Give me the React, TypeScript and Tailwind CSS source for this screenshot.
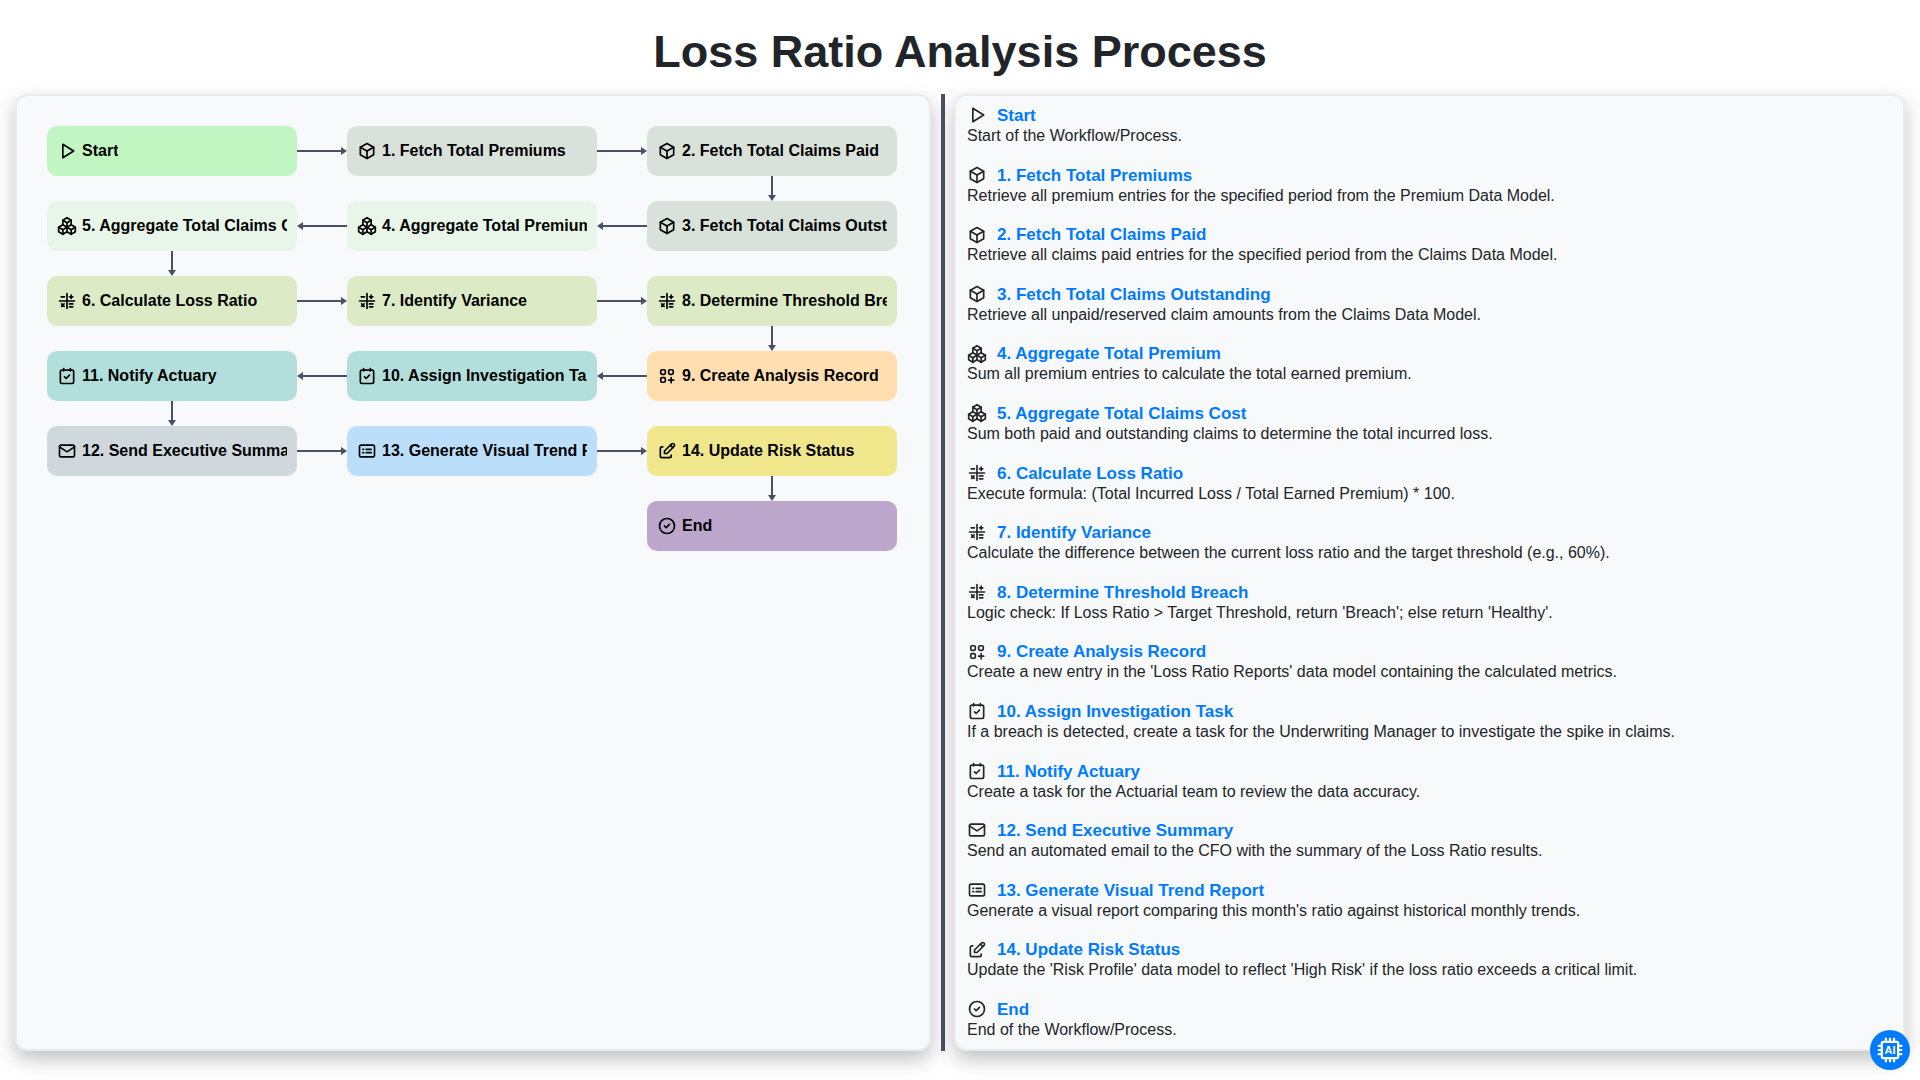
import { ReactNode } from "react";
import { TbBox, TbCircleCheck, TbEdit, TbMail, TbPackages, TbPlayerPlay } from "react-icons/tb";

function Glyph({ children }: { children: ReactNode }) {
  return (
    <svg width="1em" height="1em" viewBox="0 0 24 24" fill="none" stroke="currentColor" strokeWidth="2" strokeLinecap="round" strokeLinejoin="round">
      {children}
    </svg>
  );
}

const TaskIcon = () => (
  <Glyph>
    <rect x="4" y="5" width="16" height="16" rx="2" />
    <path d="M8 3v3M16 3v3M9 13l2 2l4 -4" />
  </Glyph>
);

const ReportIcon = () => (
  <Glyph>
    <rect x="3" y="5" width="18" height="14" rx="2" />
    <path d="M7 10h1M7 14h1M11 10h6M11 14h6" />
  </Glyph>
);

const MathIcon = () => (
  <Glyph>
    <path d="M3 12h18M12 3v18M5 7h4M15 7h4M17 5v4M5.5 15.5l3 3M8.5 15.5l-3 3M15 15.5h4M15 19h4" />
  </Glyph>
);

const RecordIcon = () => (
  <Glyph>
    <rect x="4.5" y="4.5" width="5.5" height="5.5" rx="1.5" />
    <rect x="14" y="4.5" width="5.5" height="5.5" rx="1.5" />
    <rect x="4.5" y="14" width="5.5" height="5.5" rx="1.5" />
    <path d="M14 17h6M17 14v6" />
  </Glyph>
);

type Step = { title: string; desc: string; icon: ReactNode; bg: string };

const STEPS: Record<string, Step> = {
  start: { title: "Start", desc: "Start of the Workflow/Process.", icon: <TbPlayerPlay />, bg: "bg-[#c1f5c1]" },
  s1: { title: "1. Fetch Total Premiums", desc: "Retrieve all premium entries for the specified period from the Premium Data Model.", icon: <TbBox />, bg: "bg-[#d9e2da]" },
  s2: { title: "2. Fetch Total Claims Paid", desc: "Retrieve all claims paid entries for the specified period from the Claims Data Model.", icon: <TbBox />, bg: "bg-[#d9e2da]" },
  s3: { title: "3. Fetch Total Claims Outstanding", desc: "Retrieve all unpaid/reserved claim amounts from the Claims Data Model.", icon: <TbBox />, bg: "bg-[#d9e2da]" },
  s4: { title: "4. Aggregate Total Premium", desc: "Sum all premium entries to calculate the total earned premium.", icon: <TbPackages />, bg: "bg-[#e8f5e9]" },
  s5: { title: "5. Aggregate Total Claims Cost", desc: "Sum both paid and outstanding claims to determine the total incurred loss.", icon: <TbPackages />, bg: "bg-[#e8f5e9]" },
  s6: { title: "6. Calculate Loss Ratio", desc: "Execute formula: (Total Incurred Loss / Total Earned Premium) * 100.", icon: <MathIcon />, bg: "bg-[#dcebc6]" },
  s7: { title: "7. Identify Variance", desc: "Calculate the difference between the current loss ratio and the target threshold (e.g., 60%).", icon: <MathIcon />, bg: "bg-[#dcebc6]" },
  s8: { title: "8. Determine Threshold Breach", desc: "Logic check: If Loss Ratio > Target Threshold, return 'Breach'; else return 'Healthy'.", icon: <MathIcon />, bg: "bg-[#dcebc6]" },
  s9: { title: "9. Create Analysis Record", desc: "Create a new entry in the 'Loss Ratio Reports' data model containing the calculated metrics.", icon: <RecordIcon />, bg: "bg-[#ffdeb0]" },
  s10: { title: "10. Assign Investigation Task", desc: "If a breach is detected, create a task for the Underwriting Manager to investigate the spike in claims.", icon: <TaskIcon />, bg: "bg-[#b2dfdb]" },
  s11: { title: "11. Notify Actuary", desc: "Create a task for the Actuarial team to review the data accuracy.", icon: <TaskIcon />, bg: "bg-[#b2dfdb]" },
  s12: { title: "12. Send Executive Summary", desc: "Send an automated email to the CFO with the summary of the Loss Ratio results.", icon: <TbMail />, bg: "bg-[#cfd8dc]" },
  s13: { title: "13. Generate Visual Trend Report", desc: "Generate a visual report comparing this month's ratio against historical monthly trends.", icon: <ReportIcon />, bg: "bg-[#bbdefb]" },
  s14: { title: "14. Update Risk Status", desc: "Update the 'Risk Profile' data model to reflect 'High Risk' if the loss ratio exceeds a critical limit.", icon: <TbEdit />, bg: "bg-[#f0e68c]" },
  end: { title: "End", desc: "End of the Workflow/Process.", icon: <TbCircleCheck />, bg: "bg-[#bca6cc]" },
};

const ORDER = ["start", "s1", "s2", "s3", "s4", "s5", "s6", "s7", "s8", "s9", "s10", "s11", "s12", "s13", "s14", "end"];

// snake layout: each row is read in the direction of its arrows
const ROWS: { cells: (string | null)[]; dir: "right" | "left"; down: number | null }[] = [
  { cells: ["start", "s1", "s2"], dir: "right", down: 2 },
  { cells: ["s5", "s4", "s3"], dir: "left", down: 0 },
  { cells: ["s6", "s7", "s8"], dir: "right", down: 2 },
  { cells: ["s11", "s10", "s9"], dir: "left", down: 0 },
  { cells: ["s12", "s13", "s14"], dir: "right", down: 2 },
  { cells: [null, null, "end"], dir: "right", down: null },
];

function ArrowH({ dir, show }: { dir: "right" | "left"; show: boolean }) {
  return (
    <div className="w-[50px] h-[50px] flex items-center shrink-0">
      {show && (
        <svg width="50" height="10" viewBox="0 0 50 10" className="block">
          {dir === "right" ? (
            <>
              <line x1="0" y1="5" x2="45" y2="5" stroke="#4a5065" strokeWidth="2" />
              <path d="M44 1 L50 5 L44 9 Z" fill="#4a5065" />
            </>
          ) : (
            <>
              <line x1="5" y1="5" x2="50" y2="5" stroke="#4a5065" strokeWidth="2" />
              <path d="M6 1 L0 5 L6 9 Z" fill="#4a5065" />
            </>
          )}
        </svg>
      )}
    </div>
  );
}

function ArrowDown() {
  return (
    <svg width="10" height="25" viewBox="0 0 10 25" className="block">
      <line x1="5" y1="0" x2="5" y2="20" stroke="#4a5065" strokeWidth="2" />
      <path d="M1 19 L5 25 L9 19 Z" fill="#4a5065" />
    </svg>
  );
}

function Node({ step }: { step: Step }) {
  return (
    <div className={`w-[250px] h-[50px] shrink-0 rounded-[10px] px-2.5 flex items-center gap-[5px] ${step.bg}`}>
      <span className="text-[20px] text-black shrink-0 flex">{step.icon}</span>
      <span className="font-bold text-base text-black whitespace-nowrap overflow-hidden">{step.title}</span>
    </div>
  );
}

export default function App() {
  return (
    <div className="w-[1920px] h-[1080px] overflow-hidden bg-white font-['Liberation_Sans',Arial,sans-serif] text-[#212529]">
      <h1 className="h-[94px] pt-[25px] text-center text-[45px] leading-[54px] font-bold">Loss Ratio Analysis Process</h1>

      <div className="flex h-[957px] pl-[15px]">
        {/* Diagram */}
        <div className="w-[916px] rounded-[12px] border-2 border-[#e9ecef] bg-[#f8f9fa] shadow-[0_8px_20px_rgba(0,0,0,0.25)] pl-[30px] pt-[30px]">
          {ROWS.map((row, i) => (
            <div key={i}>
              <div className="flex">
                {row.cells.map((id, c) => (
                  <div key={c} className="flex">
                    {id ? <Node step={STEPS[id]} /> : <div className="w-[250px] h-[50px]" />}
                    {c < 2 && <ArrowH dir={row.dir} show={!!id} />}
                  </div>
                ))}
              </div>
              {i < ROWS.length - 1 && (
                <div className="flex h-[25px]">
                  <div className={`w-[250px] flex justify-center ${row.down === 0 ? "" : "invisible"}`}>
                    <ArrowDown />
                  </div>
                  <div className="w-[350px]" />
                  <div className={`w-[250px] flex justify-center ${row.down === 2 ? "" : "invisible"}`}>
                    <ArrowDown />
                  </div>
                </div>
              )}
            </div>
          ))}
        </div>

        <div className="w-1 bg-[#4a5065] ml-2.5 mr-[9px]" />

        {/* Step descriptions */}
        <div className="w-[951px] rounded-[12px] border-2 border-[#e9ecef] bg-[#f8f9fa] shadow-[0_8px_20px_rgba(0,0,0,0.25)] pl-[11px] pt-[9.7px]">
          {ORDER.map((id) => {
            const s = STEPS[id];
            return (
              <div key={id} className="h-[59.6px]">
                <div className="flex items-center h-[20.3px]">
                  <span className="text-[20px] text-[#212529] w-[30px] shrink-0 flex -mt-px">{s.icon}</span>
                  <span className="font-bold text-[17px] text-[#007bff]">{s.title}</span>
                </div>
                <div className="text-base leading-5">{s.desc}</div>
              </div>
            );
          })}
        </div>
      </div>

      {/* AI button */}
      <div className="fixed left-[1870px] top-[1030px] w-10 h-10 rounded-full bg-[#007bff] flex items-center justify-center">
        <svg width="28" height="28" viewBox="0 0 24 24" fill="none" stroke="white" strokeWidth="1.9">
          <rect x="5" y="5" width="14" height="14" rx="1" />
          <path d="M1.5 8.5h3.5M1.5 12h3.5M1.5 15.5h3.5M19 8.5h3.5M19 12h3.5M19 15.5h3.5M8.5 1.5v3.5M12 1.5v3.5M15.5 1.5v3.5M8.5 19v3.5M12 19v3.5M15.5 19v3.5" />
        </svg>
        <span className="absolute text-white font-bold text-[11px] leading-none">AI</span>
      </div>
    </div>
  );
}
